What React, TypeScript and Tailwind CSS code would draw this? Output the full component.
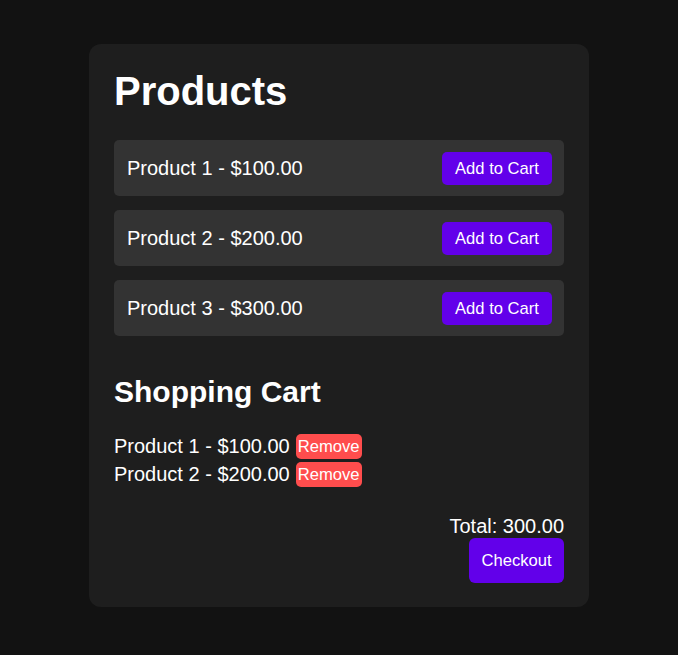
const products = [
  { id: 1, name: "Product 1", price: 100 },
  { id: 2, name: "Product 2", price: 200 },
  { id: 3, name: "Product 3", price: 300 },
];

const cart = [products[0], products[1]];

export default function App() {
  const total = cart.reduce((sum, p) => sum + p.price, 0);

  return (
    <div className="min-h-screen bg-[#121212] pt-[44px] font-['Liberation_Sans',Arial,sans-serif] text-white">
      <div className="mx-auto w-[500px] rounded-[12px] bg-[#1e1e1e] px-[25px] pt-[24px] pb-[24px]">
        <h1 className="text-[40px] font-bold leading-[46px]">Products</h1>

        {/* Product list */}
        <div className="mt-[26px] flex flex-col gap-[14px]">
          {products.map((p) => (
            <div
              key={p.id}
              className="flex h-[56px] items-center justify-between rounded-[5px] bg-[#333333] pl-[13px] pr-3"
            >
              <span className="text-[20px] leading-[23px]">
                {p.name} - ${p.price.toFixed(2)}
              </span>
              <button className="h-[33px] w-[110px] rounded-[5px] bg-[#6200ea] text-[16.6px] leading-[19px] text-white">
                Add to Cart
              </button>
            </div>
          ))}
        </div>

        <h2 className="mt-[38px] text-[30px] font-bold leading-[35px]">Shopping Cart</h2>

        {/* Cart items */}
        <div className="mt-[23px] flex flex-col">
          {cart.map((p) => (
            <div key={p.id} className="flex h-[28px] items-center gap-[6px]">
              <span className="text-[20px] leading-[28px]">
                {p.name} - ${p.price.toFixed(2)}
              </span>
              <button className="h-[25px] w-[66px] rounded-[5px] bg-[#ff4d4d] text-[16.6px] leading-[19px] text-white">
                Remove
              </button>
            </div>
          ))}
        </div>

        <div className="mt-[27px] flex flex-col items-end">
          <div className="text-[20px] leading-[23px]">Total: {total.toFixed(2)}</div>
          <button className="h-[45px] w-[95px] rounded-[6px] bg-[#6200ea] text-[16.6px] leading-[19px] text-white">
            Checkout
          </button>
        </div>
      </div>
    </div>
  );
}
